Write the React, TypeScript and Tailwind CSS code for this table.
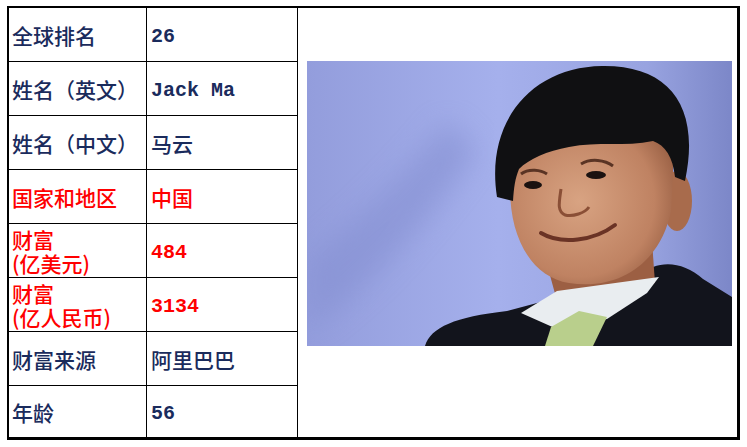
const rows = [
  { label: '全球排名', value: '26', red: false, latin: true },
  { label: '姓名（英文）', value: 'Jack Ma', red: false, latin: true },
  { label: '姓名（中文）', value: '马云', red: false, latin: false },
  { label: '国家和地区', value: '中国', red: true, latin: false },
  { label: '财富\n(亿美元)', value: '484', red: true, latin: true },
  { label: '财富\n(亿人民币)', value: '3134', red: true, latin: true },
  { label: '财富来源', value: '阿里巴巴', red: false, latin: false },
  { label: '年龄', value: '56', red: false, latin: true },
]

const Portrait = () => (
  <svg width="425" height="285" viewBox="0 0 425 285">
    <defs>
      <linearGradient id="bg" x1="0" y1="0" x2="1" y2="0">
        <stop offset="0" stopColor="#939ddc" />
        <stop offset="0.45" stopColor="#a5b0ec" />
        <stop offset="0.8" stopColor="#98a3e0" />
        <stop offset="1" stopColor="#7c87c8" />
      </linearGradient>
      <radialGradient id="face" cx="0.42" cy="0.5" r="0.7">
        <stop offset="0" stopColor="#d8a382" />
        <stop offset="0.65" stopColor="#bf8262" />
        <stop offset="1" stopColor="#8a5238" />
      </radialGradient>
      <filter id="blur"><feGaussianBlur stdDeviation="14" /></filter>
    </defs>
    <rect width="425" height="285" fill="url(#bg)" />
    <path d="M0 200 C 60 150, 90 120, 140 60 L 170 90 C 120 160, 70 220, 0 270 Z" fill="#8590d2" filter="url(#blur)" opacity="0.6" />
    {/* suit */}
    <path d="M118 285 C 124 266, 148 256, 200 250 L 245 238 L 330 224 L 346 206 C 362 200, 380 204, 396 218 L 425 236 L 425 285 Z" fill="#12141c" />
    {/* neck */}
    <path d="M238 196 L 345 180 L 348 222 L 250 240 Z" fill="#9c5f43" />
    {/* shirt */}
    <path d="M214 252 L 250 230 L 352 216 L 340 232 L 300 258 L 250 268 Z" fill="#e9edf0" />
    {/* tie */}
    <path d="M244 266 L 272 250 L 300 256 L 286 285 L 238 285 Z" fill="#b9cf8c" />
    {/* ear */}
    <ellipse cx="370" cy="140" rx="15" ry="30" fill="#a86b4c" />
    {/* face */}
    <path d="M204 110 C 198 170, 222 216, 262 222 C 314 230, 354 200, 364 150 L 368 70 C 330 50, 236 52, 206 80 Z" fill="url(#face)" />
    {/* hair */}
    <path d="M190 136 C 178 60, 225 6, 295 5 C 362 4, 394 45, 378 120 L 368 116 C 366 96, 358 84, 346 80 C 318 86, 290 80, 262 86 C 240 90, 222 98, 212 108 C 208 118, 207 126, 206 140 Z" fill="#101012" />
    {/* eyes */}
    <ellipse cx="226" cy="124" rx="9" ry="4" fill="#1b1210" />
    <ellipse cx="289" cy="114" rx="10" ry="4" fill="#1b1210" />
    <path d="M214 113 C 222 107, 234 109, 240 113" stroke="#5a3424" strokeWidth="3" fill="none" />
    <path d="M274 103 C 284 97, 298 99, 306 105" stroke="#5a3424" strokeWidth="3" fill="none" />
    {/* nose */}
    <path d="M254 128 C 252 142, 250 150, 258 154 C 266 156, 278 152, 282 146" stroke="#8a4f36" strokeWidth="3" fill="none" />
    {/* mouth */}
    <path d="M234 172 C 254 184, 287 180, 308 164" stroke="#6a3325" strokeWidth="4" fill="none" strokeLinecap="round" />
  </svg>
)

export default function App() {
  return (
    <div className="bg-white w-[747px] h-[447px] pt-[6px] pl-[7px] font-['Noto_Sans_CJK_SC',sans-serif]">
      <div className="flex w-[733px] border-t-2 border-l-2 border-r-[3px] border-b-[3px] border-black">
        <div className="w-[289px] border-r border-black">
          {rows.map((row, i) => (
            <div
              key={i}
              className={`flex ${i < rows.length - 1 ? 'h-[54px] border-b border-black' : 'h-[51px]'} ${row.red ? 'text-[#f00]' : 'text-[#1a2b5c]'}`}
            >
              <div className="w-[138px] border-r border-black pl-[3px] flex items-center text-[21px] font-medium">
                <div className="leading-[24px] whitespace-pre-line">{row.label}</div>
              </div>
              <div className="flex-1 pl-[4px] flex items-center text-[21px] font-medium">
                {row.latin ? (
                  <span className="font-['Liberation_Mono',monospace] font-bold text-[20px] leading-[24px] pt-[5px]">{row.value}</span>
                ) : (
                  <span className="leading-[24px]">{row.value}</span>
                )}
              </div>
            </div>
          ))}
        </div>
        <div className="flex-1 pt-[53px] pl-[9px]">
          <Portrait />
        </div>
      </div>
    </div>
  )
}
